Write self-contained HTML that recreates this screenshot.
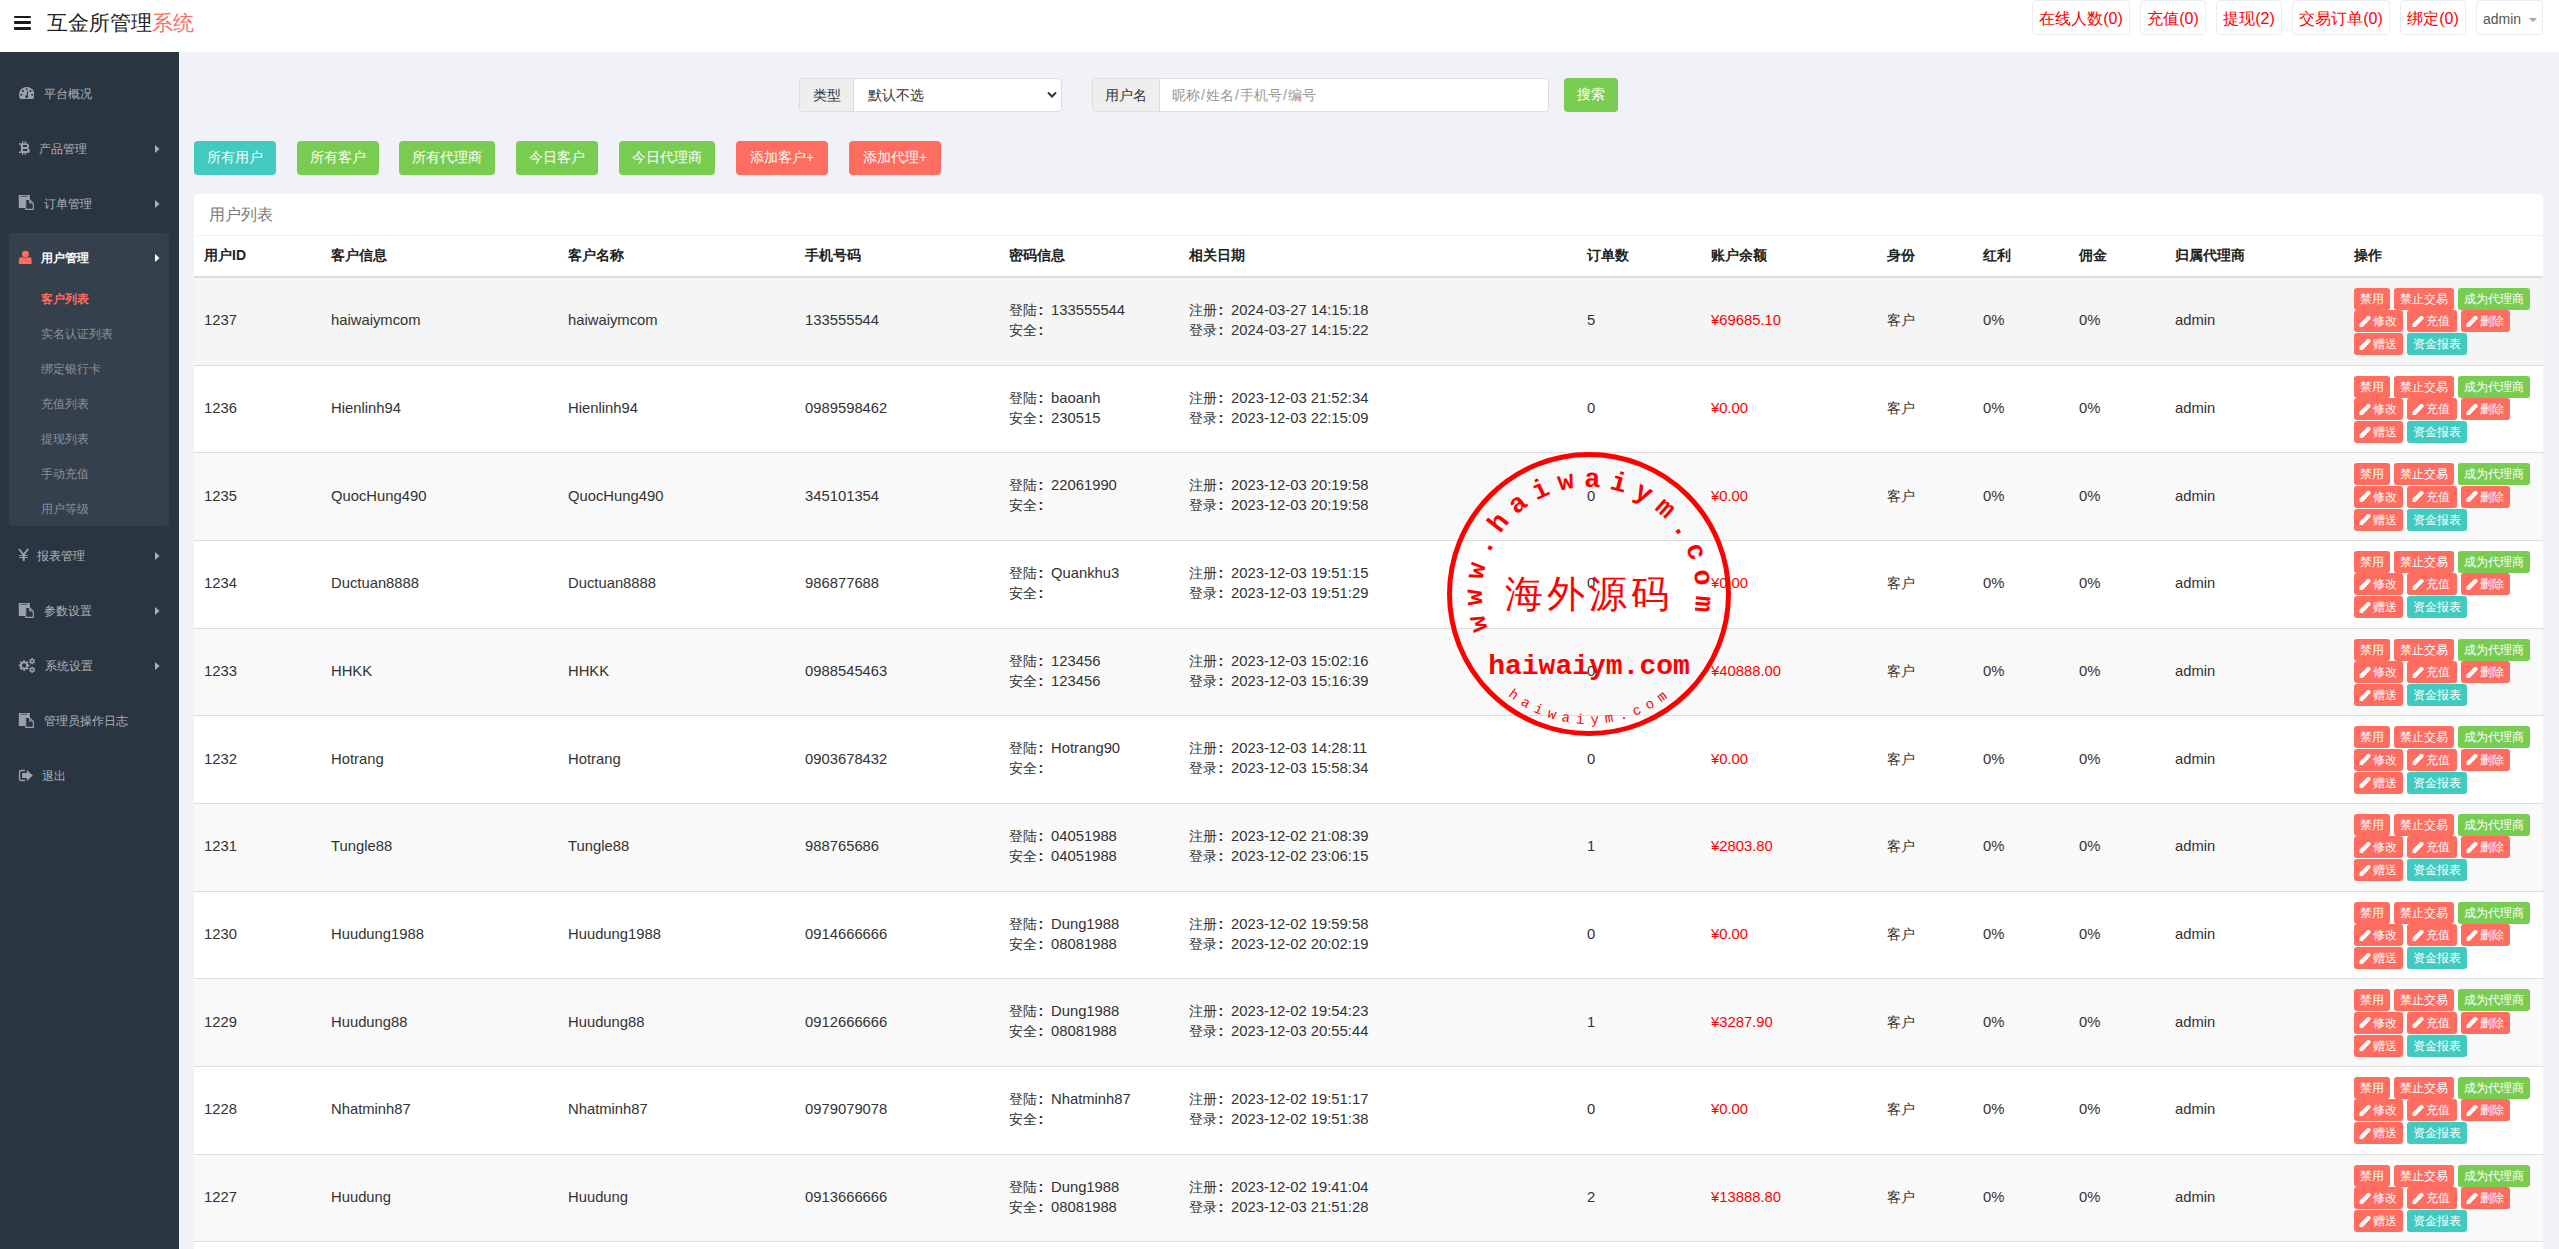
<!DOCTYPE html>
<html><head><meta charset="utf-8"><title>互金所管理系统</title>
<style>
*{box-sizing:border-box}
html,body{margin:0;padding:0}
body{width:2559px;height:1249px;overflow:hidden;background:#f1f2f7;font-family:"Liberation Sans",sans-serif;color:#333;position:relative}
#hdr{position:absolute;left:0;top:0;width:2559px;height:52px;background:#fff}
#burger{position:absolute;left:14px;top:15.8px;width:17px;height:14px}
#burger i{position:absolute;left:0;width:17px;height:2.7px;background:#1a1a1a;border-radius:1px}
#logo{position:absolute;left:47px;top:9px;font-size:21px;line-height:28px;color:#222;white-space:nowrap}
#logo span{color:#ff6c60}
.nb{position:absolute;top:0;height:35px;border:1px solid #e9ecf2;border-radius:4px;background:#fff;color:#f00;font-size:16px;line-height:35px;text-align:center;white-space:nowrap}
.adm{color:#555;font-size:14px;text-align:left;padding-left:6px;line-height:37px}
.caret{position:absolute;left:52px;top:17px;width:0;height:0;border-left:4px solid transparent;border-right:4px solid transparent;border-top:4px solid #a0a6b2}
#side{position:absolute;left:0;top:52px;width:179px;height:1197px;background:#2a3542}
.act{position:absolute;left:9px;top:181px;width:160px;height:293px;background:#35404d;border-radius:4px}
.mi{position:absolute;font-size:12px;line-height:20px;color:#aeb2b7;white-space:nowrap}
.mi.on{color:#fff;font-weight:bold}
.ic{position:absolute}
.si{position:absolute;left:41px;font-size:12px;line-height:20px;color:#89919a;white-space:nowrap}
.si.on{color:#ff6c60;font-weight:bold}
.ig{position:absolute;top:78px;height:34px;border:1px solid #ddd;border-radius:4px;background:#fff}
.ig .ad{position:absolute;left:0;top:0;height:32px;background:#eee;border-right:1px solid #ddd;border-radius:3px 0 0 3px;font-size:14px;line-height:32px;color:#333;text-align:center}
.ig .val{position:absolute;top:0;font-size:14px;line-height:32px;white-space:nowrap}
.btn{position:absolute;top:141px;height:34px;border-radius:4px;color:#fff;font-size:14px;line-height:32px;text-align:center;white-space:nowrap}
.bp{background:#41cac0}
.bs{background:#78cd51}
.bd{background:#ff6c60}
#panel{position:absolute;left:194px;top:194px;width:2349px;height:1100px;background:#fff;border-radius:4px;overflow:hidden}
.ph{position:absolute;left:0;top:0;width:100%;height:42px;border-bottom:1px solid #eff2f7;font-size:16px;line-height:42px;padding-left:15px;color:#797979}
.th{position:absolute;top:51px;font-size:14px;line-height:20px;font-weight:bold;color:#222;white-space:nowrap}
#panel:after{content:"";position:absolute;left:0;top:82px;width:100%;height:2px;background:#ddd}
.tr{position:absolute;left:0;width:100%;height:87.667px;border-bottom:1px solid #ddd}
.td{position:absolute;top:32.2px;font-size:14.8px;line-height:20px;color:#333;white-space:nowrap}
.td2{position:absolute;top:22px;font-size:14.8px;line-height:20px;color:#333;white-space:nowrap}
.red{color:#f00}
.sl{padding:0 1.3px 0 0.9px}
.c{font-size:14px}
.col{display:inline-block;width:14px;padding-left:1.5px;font-weight:bold;font-size:14.5px}
.ops{position:relative;width:190px;height:68px}
.bx{position:absolute;height:22px;border-radius:3px;color:#fff;font-size:12px;line-height:22px;text-align:center;white-space:nowrap}
.bx.d{background:#ff6c60}
.bx.s{background:#78cd51}
.bx.p{background:#41cac0}
.pc{position:absolute;left:4.8px;top:5.8px}
.bx.pb{text-align:left;padding-left:18.5px}
#stamp{position:absolute;overflow:visible}
.st1{font-family:"Liberation Mono",monospace;font-weight:bold;font-size:27px;fill:#f00;text-anchor:middle;dominant-baseline:central}
.st3{font-family:"Liberation Mono",monospace;font-size:14px;fill:#f00;text-anchor:middle;dominant-baseline:central}
.st2{font-family:"Liberation Serif",serif;font-size:38px;fill:#f00;text-anchor:middle;letter-spacing:4px}
.st4{font-family:"Liberation Mono",monospace;font-weight:bold;font-size:28px;fill:#f00;text-anchor:middle}
</style></head>
<body>
<div id="hdr">
<div id="burger"><i style="top:0"></i><i style="top:5.7px"></i><i style="top:11.3px"></i></div>
<div id="logo">互金所管理<span>系统</span></div>
<div class="nb" style="left:2032px;width:98px">在线人数(0)</div>
<div class="nb" style="left:2140px;width:66px">充值(0)</div>
<div class="nb" style="left:2216px;width:66px">提现(2)</div>
<div class="nb" style="left:2292px;width:98px">交易订单(0)</div>
<div class="nb" style="left:2400px;width:66px">绑定(0)</div>
<div class="nb adm" style="left:2476px;width:67px">admin<span class="caret"></span></div>
</div>
<div id="side">
<div class="act"></div>
<div class="mi" style="top:31.5px;left:43.6px">平台概况</div>
<svg class="ic" style="left:18.75px;top:34.90px" width="15.5" height="12.2" viewBox="0 0 15.5 12.2"><path d="M1.4 12.1 Q0 10.5 0 7.75 A7.75 7.75 0 0 1 15.5 7.75 Q15.5 10.5 14.1 12.1 Z" fill="#9ea3aa"/><g fill="#2a3542"><circle cx="7.75" cy="2.3" r="1.05"/><circle cx="4.05" cy="4.1" r="1.05"/><circle cx="11.45" cy="4.1" r="1.05"/><circle cx="2.25" cy="7.8" r="1.05"/><circle cx="13.25" cy="7.8" r="1.05"/><circle cx="7.75" cy="9.7" r="1.45"/></g><path d="M8.75 4.4 L7.9 9.5" stroke="#2a3542" stroke-width="1.1"/></svg>
<div class="mi" style="top:86.5px;left:39.4px">产品管理</div>
<svg class="ic" style="left:19px;top:89.0px" width="11" height="14" viewBox="0 0 11 14"><path fill="#9ea3aa" fill-rule="evenodd" d="M0 2.2 H7.3 Q10 2.2 10 4.9 Q10 6.4 8.9 6.9 Q10.8 7.5 10.8 9.4 Q10.8 12 7.8 12 H0 V10.4 H1.9 V3.8 H0 Z M4 3.9 V6 H7.2 Q8.1 6 8.1 4.95 Q8.1 3.9 7.2 3.9 Z M4 7.9 V10.1 H7.6 Q8.6 10.1 8.6 9 Q8.6 7.9 7.6 7.9 Z"/><rect x="3.1" y="0" width="1.1" height="2.4" fill="#9ea3aa"/><rect x="5.7" y="0" width="1.1" height="2.4" fill="#9ea3aa"/><rect x="3.1" y="11.8" width="1.1" height="2.2" fill="#9ea3aa"/><rect x="5.7" y="11.8" width="1.1" height="2.2" fill="#9ea3aa"/></svg>
<svg class="ic" style="left:155px;top:92.5px" width="5" height="8" viewBox="0 0 5 8"><path d="M0 0 L4.5 4 L0 8 Z" fill="#aeb2b7"/></svg>
<div class="mi" style="top:141.5px;left:43.6px">订单管理</div>
<svg class="ic" style="left:18px;top:142.3px" width="17" height="17" viewBox="0 0 17 17"><path d="M0.8 1 H11.8 V5 H7 V14 H0.8 Z" fill="#9ea3aa"/><rect x="2.6" y="1.8" width="6.6" height="0.9" fill="#2a3542" opacity="0.8"/><path d="M7.7 5.5 H11.4 L15.3 9.4 V15.4 H7.7 Z" fill="none" stroke="#9ea3aa" stroke-width="1.1"/><path d="M11.2 5.6 V9.6 H15.2 Z" fill="#9ea3aa"/><path d="M12.3 7.2 V8.6 H13.7 Z" fill="#2a3542"/></svg>
<svg class="ic" style="left:155px;top:147.5px" width="5" height="8" viewBox="0 0 5 8"><path d="M0 0 L4.5 4 L0 8 Z" fill="#aeb2b7"/></svg>
<div class="mi on" style="top:196.0px;left:40.5px">用户管理</div>
<svg class="ic" style="left:18px;top:198.0px" width="14" height="14" viewBox="0 0 14 14"><circle cx="7.4" cy="4.1" r="3.45" fill="#ff6c60"/><path d="M0.9 14 V9.6 Q0.9 7.2 3.3 7.2 H11.2 Q13.6 7.2 13.6 9.6 V14 Z" fill="#ff6c60"/><path d="M4.6 7.2 Q7.4 8.4 10.2 7.2" fill="none" stroke="#35404d" stroke-width="0.5"/></svg>
<svg class="ic" style="left:155px;top:202.0px" width="5" height="8" viewBox="0 0 5 8"><path d="M0 0 L4.5 4 L0 8 Z" fill="#fff"/></svg>
<div class="mi" style="top:494.0px;left:37.0px">报表管理</div>
<svg class="ic" style="left:18px;top:496.0px" width="11" height="14" viewBox="0 0 11 14"><path d="M1 1 L5.6 6.8 L10.2 1" fill="none" stroke="#9ea3aa" stroke-width="1.9"/><rect x="4.6" y="6" width="2.1" height="6.9" fill="#9ea3aa"/><rect x="1.3" y="6.9" width="8.5" height="1" fill="#9ea3aa"/><rect x="1.3" y="9" width="8.5" height="1" fill="#9ea3aa"/></svg>
<svg class="ic" style="left:155px;top:500.0px" width="5" height="8" viewBox="0 0 5 8"><path d="M0 0 L4.5 4 L0 8 Z" fill="#aeb2b7"/></svg>
<div class="mi" style="top:549.0px;left:43.7px">参数设置</div>
<svg class="ic" style="left:18px;top:549.8px" width="17" height="17" viewBox="0 0 17 17"><path d="M0.8 1 H11.8 V5 H7 V14 H0.8 Z" fill="#9ea3aa"/><rect x="2.6" y="1.8" width="6.6" height="0.9" fill="#2a3542" opacity="0.8"/><path d="M7.7 5.5 H11.4 L15.3 9.4 V15.4 H7.7 Z" fill="none" stroke="#9ea3aa" stroke-width="1.1"/><path d="M11.2 5.6 V9.6 H15.2 Z" fill="#9ea3aa"/><path d="M12.3 7.2 V8.6 H13.7 Z" fill="#2a3542"/></svg>
<svg class="ic" style="left:155px;top:555.0px" width="5" height="8" viewBox="0 0 5 8"><path d="M0 0 L4.5 4 L0 8 Z" fill="#aeb2b7"/></svg>
<div class="mi" style="top:604.0px;left:45.0px">系统设置</div>
<svg class="ic" style="left:18px;top:606.0px" width="18" height="16" viewBox="0 0 18 16"><path fill="#9ea3aa" fill-rule="evenodd" d="M5.14 3.51 L5.09 2.20 L7.11 2.20 L7.06 3.51 L8.24 4.00 L9.14 3.03 L10.57 4.46 L9.60 5.36 L10.09 6.54 L11.40 6.49 L11.40 8.51 L10.09 8.46 L9.60 9.64 L10.57 10.54 L9.14 11.97 L8.24 11.00 L7.06 11.49 L7.11 12.80 L5.09 12.80 L5.14 11.49 L3.96 11.00 L3.06 11.97 L1.63 10.54 L2.60 9.64 L2.11 8.46 L0.80 8.51 L0.80 6.49 L2.11 6.54 L2.60 5.36 L1.63 4.46 L3.06 3.03 L3.96 4.00 Z M8.30 7.50 A2.2 2.2 0 1 0 3.90 7.50 A2.2 2.2 0 1 0 8.30 7.50 Z M13.39 1.01 L13.30 0.10 L14.90 0.10 L14.81 1.01 L15.64 1.49 L16.39 0.96 L17.18 2.34 L16.35 2.72 L16.35 3.68 L17.18 4.06 L16.39 5.44 L15.64 4.91 L14.81 5.39 L14.90 6.30 L13.30 6.30 L13.39 5.39 L12.56 4.91 L11.81 5.44 L11.02 4.06 L11.85 3.68 L11.85 2.72 L11.02 2.34 L11.81 0.96 L12.56 1.49 Z M15.10 3.20 A1.0 1.0 0 1 0 13.10 3.20 A1.0 1.0 0 1 0 15.10 3.20 Z M13.39 9.61 L13.30 8.70 L14.90 8.70 L14.81 9.61 L15.64 10.09 L16.39 9.56 L17.18 10.94 L16.35 11.32 L16.35 12.28 L17.18 12.66 L16.39 14.04 L15.64 13.51 L14.81 13.99 L14.90 14.90 L13.30 14.90 L13.39 13.99 L12.56 13.51 L11.81 14.04 L11.02 12.66 L11.85 12.28 L11.85 11.32 L11.02 10.94 L11.81 9.56 L12.56 10.09 Z M15.10 11.80 A1.0 1.0 0 1 0 13.10 11.80 A1.0 1.0 0 1 0 15.10 11.80 Z"/></svg>
<svg class="ic" style="left:155px;top:610.0px" width="5" height="8" viewBox="0 0 5 8"><path d="M0 0 L4.5 4 L0 8 Z" fill="#aeb2b7"/></svg>
<div class="mi" style="top:659.0px;left:43.7px">管理员操作日志</div>
<svg class="ic" style="left:18px;top:659.8px" width="17" height="17" viewBox="0 0 17 17"><path d="M0.8 1 H11.8 V5 H7 V14 H0.8 Z" fill="#9ea3aa"/><rect x="2.6" y="1.8" width="6.6" height="0.9" fill="#2a3542" opacity="0.8"/><path d="M7.7 5.5 H11.4 L15.3 9.4 V15.4 H7.7 Z" fill="none" stroke="#9ea3aa" stroke-width="1.1"/><path d="M11.2 5.6 V9.6 H15.2 Z" fill="#9ea3aa"/><path d="M12.3 7.2 V8.6 H13.7 Z" fill="#2a3542"/></svg>
<div class="mi" style="top:714.0px;left:42.3px">退出</div>
<svg class="ic" style="left:18px;top:717.0px" width="19" height="13" viewBox="0 0 19 13"><path d="M6.9 1.5 H3.2 Q1.5 1.5 1.5 3.2 V9.8 Q1.5 11.5 3.2 11.5 H6.9" fill="none" stroke="#9ea3aa" stroke-width="1.4"/><path d="M4.1 4.0 H8.85 V1 L14.8 6.45 L8.85 11.9 V8.9 H4.1 Z" fill="#9ea3aa"/></svg>
<div class="si on" style="top:236.5px">客户列表</div>
<div class="si" style="top:271.5px">实名认证列表</div>
<div class="si" style="top:306.5px">绑定银行卡</div>
<div class="si" style="top:341.5px">充值列表</div>
<div class="si" style="top:376.5px">提现列表</div>
<div class="si" style="top:411.5px">手动充值</div>
<div class="si" style="top:446.5px">用户等级</div>
</div>
<div class="ig" style="left:799px;width:263px"><div class="ad" style="width:54px">类型</div><div class="val" style="left:68px">默认不选</div>
<svg style="position:absolute;left:247px;top:12px" width="10" height="8" viewBox="0 0 10 8"><path d="M1 1.5 L5 5.5 L9 1.5" fill="none" stroke="#333" stroke-width="2"/></svg></div>
<div class="ig" style="left:1092px;width:457px"><div class="ad" style="width:67px">用户名</div><div class="val" style="left:79px;color:#999">昵称<span class="sl">/</span>姓名<span class="sl">/</span>手机号<span class="sl">/</span>编号</div></div>
<div class="btn bs" style="left:1564px;top:78px;width:54px">搜索</div>
<div class="btn bp" style="left:194px;width:82px">所有用户</div>
<div class="btn bs" style="left:297px;width:82px">所有客户</div>
<div class="btn bs" style="left:399px;width:96px">所有代理商</div>
<div class="btn bs" style="left:516px;width:82px">今日客户</div>
<div class="btn bs" style="left:619px;width:96px">今日代理商</div>
<div class="btn bd" style="left:736px;width:92px">添加客户+</div>
<div class="btn bd" style="left:849px;width:92px">添加代理+</div>
<div id="panel">
<div class="ph">用户列表</div>
<div class="th" style="left:10px">用户ID</div>
<div class="th" style="left:137px">客户信息</div>
<div class="th" style="left:374px">客户名称</div>
<div class="th" style="left:611px">手机号码</div>
<div class="th" style="left:815px">密码信息</div>
<div class="th" style="left:995px">相关日期</div>
<div class="th" style="left:1393px">订单数</div>
<div class="th" style="left:1517px">账户余额</div>
<div class="th" style="left:1693px">身份</div>
<div class="th" style="left:1789px">红利</div>
<div class="th" style="left:1885px">佣金</div>
<div class="th" style="left:1981px">归属代理商</div>
<div class="th" style="left:2160px">操作</div>
<div class="tr" style="top:84.00px;background:#f5f5f5">
<div class="td" style="left:10px">1237</div>
<div class="td" style="left:137px">haiwaiymcom</div>
<div class="td" style="left:374px">haiwaiymcom</div>
<div class="td" style="left:611px">133555544</div>
<div class="td2" style="left:815px"><span class="c">登陆</span><span class="col">:</span>133555544<br><span class="c">安全</span><span class="col">:</span></div>
<div class="td2" style="left:995px"><span class="c">注册</span><span class="col">:</span>2024-03-27 14:15:18<br><span class="c">登录</span><span class="col">:</span>2024-03-27 14:15:22</div>
<div class="td" style="left:1393px">5</div>
<div class="td" style="left:1517px"><span class="red">¥69685.10</span></div>
<div class="td" style="left:1693px"><span class="c">客户</span></div>
<div class="td" style="left:1789px">0%</div>
<div class="td" style="left:1885px">0%</div>
<div class="td" style="left:1981px">admin</div>
<div style="position:absolute;left:2160px;top:10px"><div class="ops"><span class="bx d" style="left:0;top:0;width:36px">禁用</span><span class="bx d" style="left:40px;top:0;width:60px">禁止交易</span><span class="bx s" style="left:104px;top:0;width:72px">成为代理商</span><span class="bx d pb" style="left:0;top:22.3px;width:49px"><svg class="pc" width="12" height="12" viewBox="0 0 12 12"><path d="M0.6 7.8 L7.9 0.5 A2.15 2.15 0 0 1 10.9 3.6 L3.6 10.9 H0.6 Z" fill="#fff"/><path d="M6.9 1.5 L9.9 4.6" stroke="#ff6c60" stroke-width="0.5" opacity="0.5"/><path d="M1.7 8.6 L2.8 9.7" stroke="#ff6c60" stroke-width="0.7" opacity="0.6"/></svg>修改</span><span class="bx d pb" style="left:53px;top:22.3px;width:50px"><svg class="pc" width="12" height="12" viewBox="0 0 12 12"><path d="M0.6 7.8 L7.9 0.5 A2.15 2.15 0 0 1 10.9 3.6 L3.6 10.9 H0.6 Z" fill="#fff"/><path d="M6.9 1.5 L9.9 4.6" stroke="#ff6c60" stroke-width="0.5" opacity="0.5"/><path d="M1.7 8.6 L2.8 9.7" stroke="#ff6c60" stroke-width="0.7" opacity="0.6"/></svg>充值</span><span class="bx d pb" style="left:107px;top:22.3px;width:49px"><svg class="pc" width="12" height="12" viewBox="0 0 12 12"><path d="M0.6 7.8 L7.9 0.5 A2.15 2.15 0 0 1 10.9 3.6 L3.6 10.9 H0.6 Z" fill="#fff"/><path d="M6.9 1.5 L9.9 4.6" stroke="#ff6c60" stroke-width="0.5" opacity="0.5"/><path d="M1.7 8.6 L2.8 9.7" stroke="#ff6c60" stroke-width="0.7" opacity="0.6"/></svg>删除</span><span class="bx d pb" style="left:0;top:45.2px;width:49px"><svg class="pc" width="12" height="12" viewBox="0 0 12 12"><path d="M0.6 7.8 L7.9 0.5 A2.15 2.15 0 0 1 10.9 3.6 L3.6 10.9 H0.6 Z" fill="#fff"/><path d="M6.9 1.5 L9.9 4.6" stroke="#ff6c60" stroke-width="0.5" opacity="0.5"/><path d="M1.7 8.6 L2.8 9.7" stroke="#ff6c60" stroke-width="0.7" opacity="0.6"/></svg>赠送</span><span class="bx p" style="left:53px;top:45.2px;width:60px">资金报表</span></div></div>
</div>
<div class="tr" style="top:171.67px;background:#fff">
<div class="td" style="left:10px">1236</div>
<div class="td" style="left:137px">Hienlinh94</div>
<div class="td" style="left:374px">Hienlinh94</div>
<div class="td" style="left:611px">0989598462</div>
<div class="td2" style="left:815px"><span class="c">登陆</span><span class="col">:</span>baoanh<br><span class="c">安全</span><span class="col">:</span>230515</div>
<div class="td2" style="left:995px"><span class="c">注册</span><span class="col">:</span>2023-12-03 21:52:34<br><span class="c">登录</span><span class="col">:</span>2023-12-03 22:15:09</div>
<div class="td" style="left:1393px">0</div>
<div class="td" style="left:1517px"><span class="red">¥0.00</span></div>
<div class="td" style="left:1693px"><span class="c">客户</span></div>
<div class="td" style="left:1789px">0%</div>
<div class="td" style="left:1885px">0%</div>
<div class="td" style="left:1981px">admin</div>
<div style="position:absolute;left:2160px;top:10px"><div class="ops"><span class="bx d" style="left:0;top:0;width:36px">禁用</span><span class="bx d" style="left:40px;top:0;width:60px">禁止交易</span><span class="bx s" style="left:104px;top:0;width:72px">成为代理商</span><span class="bx d pb" style="left:0;top:22.3px;width:49px"><svg class="pc" width="12" height="12" viewBox="0 0 12 12"><path d="M0.6 7.8 L7.9 0.5 A2.15 2.15 0 0 1 10.9 3.6 L3.6 10.9 H0.6 Z" fill="#fff"/><path d="M6.9 1.5 L9.9 4.6" stroke="#ff6c60" stroke-width="0.5" opacity="0.5"/><path d="M1.7 8.6 L2.8 9.7" stroke="#ff6c60" stroke-width="0.7" opacity="0.6"/></svg>修改</span><span class="bx d pb" style="left:53px;top:22.3px;width:50px"><svg class="pc" width="12" height="12" viewBox="0 0 12 12"><path d="M0.6 7.8 L7.9 0.5 A2.15 2.15 0 0 1 10.9 3.6 L3.6 10.9 H0.6 Z" fill="#fff"/><path d="M6.9 1.5 L9.9 4.6" stroke="#ff6c60" stroke-width="0.5" opacity="0.5"/><path d="M1.7 8.6 L2.8 9.7" stroke="#ff6c60" stroke-width="0.7" opacity="0.6"/></svg>充值</span><span class="bx d pb" style="left:107px;top:22.3px;width:49px"><svg class="pc" width="12" height="12" viewBox="0 0 12 12"><path d="M0.6 7.8 L7.9 0.5 A2.15 2.15 0 0 1 10.9 3.6 L3.6 10.9 H0.6 Z" fill="#fff"/><path d="M6.9 1.5 L9.9 4.6" stroke="#ff6c60" stroke-width="0.5" opacity="0.5"/><path d="M1.7 8.6 L2.8 9.7" stroke="#ff6c60" stroke-width="0.7" opacity="0.6"/></svg>删除</span><span class="bx d pb" style="left:0;top:45.2px;width:49px"><svg class="pc" width="12" height="12" viewBox="0 0 12 12"><path d="M0.6 7.8 L7.9 0.5 A2.15 2.15 0 0 1 10.9 3.6 L3.6 10.9 H0.6 Z" fill="#fff"/><path d="M6.9 1.5 L9.9 4.6" stroke="#ff6c60" stroke-width="0.5" opacity="0.5"/><path d="M1.7 8.6 L2.8 9.7" stroke="#ff6c60" stroke-width="0.7" opacity="0.6"/></svg>赠送</span><span class="bx p" style="left:53px;top:45.2px;width:60px">资金报表</span></div></div>
</div>
<div class="tr" style="top:259.33px;background:#f9f9f9">
<div class="td" style="left:10px">1235</div>
<div class="td" style="left:137px">QuocHung490</div>
<div class="td" style="left:374px">QuocHung490</div>
<div class="td" style="left:611px">345101354</div>
<div class="td2" style="left:815px"><span class="c">登陆</span><span class="col">:</span>22061990<br><span class="c">安全</span><span class="col">:</span></div>
<div class="td2" style="left:995px"><span class="c">注册</span><span class="col">:</span>2023-12-03 20:19:58<br><span class="c">登录</span><span class="col">:</span>2023-12-03 20:19:58</div>
<div class="td" style="left:1393px">0</div>
<div class="td" style="left:1517px"><span class="red">¥0.00</span></div>
<div class="td" style="left:1693px"><span class="c">客户</span></div>
<div class="td" style="left:1789px">0%</div>
<div class="td" style="left:1885px">0%</div>
<div class="td" style="left:1981px">admin</div>
<div style="position:absolute;left:2160px;top:10px"><div class="ops"><span class="bx d" style="left:0;top:0;width:36px">禁用</span><span class="bx d" style="left:40px;top:0;width:60px">禁止交易</span><span class="bx s" style="left:104px;top:0;width:72px">成为代理商</span><span class="bx d pb" style="left:0;top:22.3px;width:49px"><svg class="pc" width="12" height="12" viewBox="0 0 12 12"><path d="M0.6 7.8 L7.9 0.5 A2.15 2.15 0 0 1 10.9 3.6 L3.6 10.9 H0.6 Z" fill="#fff"/><path d="M6.9 1.5 L9.9 4.6" stroke="#ff6c60" stroke-width="0.5" opacity="0.5"/><path d="M1.7 8.6 L2.8 9.7" stroke="#ff6c60" stroke-width="0.7" opacity="0.6"/></svg>修改</span><span class="bx d pb" style="left:53px;top:22.3px;width:50px"><svg class="pc" width="12" height="12" viewBox="0 0 12 12"><path d="M0.6 7.8 L7.9 0.5 A2.15 2.15 0 0 1 10.9 3.6 L3.6 10.9 H0.6 Z" fill="#fff"/><path d="M6.9 1.5 L9.9 4.6" stroke="#ff6c60" stroke-width="0.5" opacity="0.5"/><path d="M1.7 8.6 L2.8 9.7" stroke="#ff6c60" stroke-width="0.7" opacity="0.6"/></svg>充值</span><span class="bx d pb" style="left:107px;top:22.3px;width:49px"><svg class="pc" width="12" height="12" viewBox="0 0 12 12"><path d="M0.6 7.8 L7.9 0.5 A2.15 2.15 0 0 1 10.9 3.6 L3.6 10.9 H0.6 Z" fill="#fff"/><path d="M6.9 1.5 L9.9 4.6" stroke="#ff6c60" stroke-width="0.5" opacity="0.5"/><path d="M1.7 8.6 L2.8 9.7" stroke="#ff6c60" stroke-width="0.7" opacity="0.6"/></svg>删除</span><span class="bx d pb" style="left:0;top:45.2px;width:49px"><svg class="pc" width="12" height="12" viewBox="0 0 12 12"><path d="M0.6 7.8 L7.9 0.5 A2.15 2.15 0 0 1 10.9 3.6 L3.6 10.9 H0.6 Z" fill="#fff"/><path d="M6.9 1.5 L9.9 4.6" stroke="#ff6c60" stroke-width="0.5" opacity="0.5"/><path d="M1.7 8.6 L2.8 9.7" stroke="#ff6c60" stroke-width="0.7" opacity="0.6"/></svg>赠送</span><span class="bx p" style="left:53px;top:45.2px;width:60px">资金报表</span></div></div>
</div>
<div class="tr" style="top:347.00px;background:#fff">
<div class="td" style="left:10px">1234</div>
<div class="td" style="left:137px">Ductuan8888</div>
<div class="td" style="left:374px">Ductuan8888</div>
<div class="td" style="left:611px">986877688</div>
<div class="td2" style="left:815px"><span class="c">登陆</span><span class="col">:</span>Quankhu3<br><span class="c">安全</span><span class="col">:</span></div>
<div class="td2" style="left:995px"><span class="c">注册</span><span class="col">:</span>2023-12-03 19:51:15<br><span class="c">登录</span><span class="col">:</span>2023-12-03 19:51:29</div>
<div class="td" style="left:1393px">0</div>
<div class="td" style="left:1517px"><span class="red">¥0.00</span></div>
<div class="td" style="left:1693px"><span class="c">客户</span></div>
<div class="td" style="left:1789px">0%</div>
<div class="td" style="left:1885px">0%</div>
<div class="td" style="left:1981px">admin</div>
<div style="position:absolute;left:2160px;top:10px"><div class="ops"><span class="bx d" style="left:0;top:0;width:36px">禁用</span><span class="bx d" style="left:40px;top:0;width:60px">禁止交易</span><span class="bx s" style="left:104px;top:0;width:72px">成为代理商</span><span class="bx d pb" style="left:0;top:22.3px;width:49px"><svg class="pc" width="12" height="12" viewBox="0 0 12 12"><path d="M0.6 7.8 L7.9 0.5 A2.15 2.15 0 0 1 10.9 3.6 L3.6 10.9 H0.6 Z" fill="#fff"/><path d="M6.9 1.5 L9.9 4.6" stroke="#ff6c60" stroke-width="0.5" opacity="0.5"/><path d="M1.7 8.6 L2.8 9.7" stroke="#ff6c60" stroke-width="0.7" opacity="0.6"/></svg>修改</span><span class="bx d pb" style="left:53px;top:22.3px;width:50px"><svg class="pc" width="12" height="12" viewBox="0 0 12 12"><path d="M0.6 7.8 L7.9 0.5 A2.15 2.15 0 0 1 10.9 3.6 L3.6 10.9 H0.6 Z" fill="#fff"/><path d="M6.9 1.5 L9.9 4.6" stroke="#ff6c60" stroke-width="0.5" opacity="0.5"/><path d="M1.7 8.6 L2.8 9.7" stroke="#ff6c60" stroke-width="0.7" opacity="0.6"/></svg>充值</span><span class="bx d pb" style="left:107px;top:22.3px;width:49px"><svg class="pc" width="12" height="12" viewBox="0 0 12 12"><path d="M0.6 7.8 L7.9 0.5 A2.15 2.15 0 0 1 10.9 3.6 L3.6 10.9 H0.6 Z" fill="#fff"/><path d="M6.9 1.5 L9.9 4.6" stroke="#ff6c60" stroke-width="0.5" opacity="0.5"/><path d="M1.7 8.6 L2.8 9.7" stroke="#ff6c60" stroke-width="0.7" opacity="0.6"/></svg>删除</span><span class="bx d pb" style="left:0;top:45.2px;width:49px"><svg class="pc" width="12" height="12" viewBox="0 0 12 12"><path d="M0.6 7.8 L7.9 0.5 A2.15 2.15 0 0 1 10.9 3.6 L3.6 10.9 H0.6 Z" fill="#fff"/><path d="M6.9 1.5 L9.9 4.6" stroke="#ff6c60" stroke-width="0.5" opacity="0.5"/><path d="M1.7 8.6 L2.8 9.7" stroke="#ff6c60" stroke-width="0.7" opacity="0.6"/></svg>赠送</span><span class="bx p" style="left:53px;top:45.2px;width:60px">资金报表</span></div></div>
</div>
<div class="tr" style="top:434.67px;background:#f9f9f9">
<div class="td" style="left:10px">1233</div>
<div class="td" style="left:137px">HHKK</div>
<div class="td" style="left:374px">HHKK</div>
<div class="td" style="left:611px">0988545463</div>
<div class="td2" style="left:815px"><span class="c">登陆</span><span class="col">:</span>123456<br><span class="c">安全</span><span class="col">:</span>123456</div>
<div class="td2" style="left:995px"><span class="c">注册</span><span class="col">:</span>2023-12-03 15:02:16<br><span class="c">登录</span><span class="col">:</span>2023-12-03 15:16:39</div>
<div class="td" style="left:1393px">0</div>
<div class="td" style="left:1517px"><span class="red">¥40888.00</span></div>
<div class="td" style="left:1693px"><span class="c">客户</span></div>
<div class="td" style="left:1789px">0%</div>
<div class="td" style="left:1885px">0%</div>
<div class="td" style="left:1981px">admin</div>
<div style="position:absolute;left:2160px;top:10px"><div class="ops"><span class="bx d" style="left:0;top:0;width:36px">禁用</span><span class="bx d" style="left:40px;top:0;width:60px">禁止交易</span><span class="bx s" style="left:104px;top:0;width:72px">成为代理商</span><span class="bx d pb" style="left:0;top:22.3px;width:49px"><svg class="pc" width="12" height="12" viewBox="0 0 12 12"><path d="M0.6 7.8 L7.9 0.5 A2.15 2.15 0 0 1 10.9 3.6 L3.6 10.9 H0.6 Z" fill="#fff"/><path d="M6.9 1.5 L9.9 4.6" stroke="#ff6c60" stroke-width="0.5" opacity="0.5"/><path d="M1.7 8.6 L2.8 9.7" stroke="#ff6c60" stroke-width="0.7" opacity="0.6"/></svg>修改</span><span class="bx d pb" style="left:53px;top:22.3px;width:50px"><svg class="pc" width="12" height="12" viewBox="0 0 12 12"><path d="M0.6 7.8 L7.9 0.5 A2.15 2.15 0 0 1 10.9 3.6 L3.6 10.9 H0.6 Z" fill="#fff"/><path d="M6.9 1.5 L9.9 4.6" stroke="#ff6c60" stroke-width="0.5" opacity="0.5"/><path d="M1.7 8.6 L2.8 9.7" stroke="#ff6c60" stroke-width="0.7" opacity="0.6"/></svg>充值</span><span class="bx d pb" style="left:107px;top:22.3px;width:49px"><svg class="pc" width="12" height="12" viewBox="0 0 12 12"><path d="M0.6 7.8 L7.9 0.5 A2.15 2.15 0 0 1 10.9 3.6 L3.6 10.9 H0.6 Z" fill="#fff"/><path d="M6.9 1.5 L9.9 4.6" stroke="#ff6c60" stroke-width="0.5" opacity="0.5"/><path d="M1.7 8.6 L2.8 9.7" stroke="#ff6c60" stroke-width="0.7" opacity="0.6"/></svg>删除</span><span class="bx d pb" style="left:0;top:45.2px;width:49px"><svg class="pc" width="12" height="12" viewBox="0 0 12 12"><path d="M0.6 7.8 L7.9 0.5 A2.15 2.15 0 0 1 10.9 3.6 L3.6 10.9 H0.6 Z" fill="#fff"/><path d="M6.9 1.5 L9.9 4.6" stroke="#ff6c60" stroke-width="0.5" opacity="0.5"/><path d="M1.7 8.6 L2.8 9.7" stroke="#ff6c60" stroke-width="0.7" opacity="0.6"/></svg>赠送</span><span class="bx p" style="left:53px;top:45.2px;width:60px">资金报表</span></div></div>
</div>
<div class="tr" style="top:522.34px;background:#fff">
<div class="td" style="left:10px">1232</div>
<div class="td" style="left:137px">Hotrang</div>
<div class="td" style="left:374px">Hotrang</div>
<div class="td" style="left:611px">0903678432</div>
<div class="td2" style="left:815px"><span class="c">登陆</span><span class="col">:</span>Hotrang90<br><span class="c">安全</span><span class="col">:</span></div>
<div class="td2" style="left:995px"><span class="c">注册</span><span class="col">:</span>2023-12-03 14:28:11<br><span class="c">登录</span><span class="col">:</span>2023-12-03 15:58:34</div>
<div class="td" style="left:1393px">0</div>
<div class="td" style="left:1517px"><span class="red">¥0.00</span></div>
<div class="td" style="left:1693px"><span class="c">客户</span></div>
<div class="td" style="left:1789px">0%</div>
<div class="td" style="left:1885px">0%</div>
<div class="td" style="left:1981px">admin</div>
<div style="position:absolute;left:2160px;top:10px"><div class="ops"><span class="bx d" style="left:0;top:0;width:36px">禁用</span><span class="bx d" style="left:40px;top:0;width:60px">禁止交易</span><span class="bx s" style="left:104px;top:0;width:72px">成为代理商</span><span class="bx d pb" style="left:0;top:22.3px;width:49px"><svg class="pc" width="12" height="12" viewBox="0 0 12 12"><path d="M0.6 7.8 L7.9 0.5 A2.15 2.15 0 0 1 10.9 3.6 L3.6 10.9 H0.6 Z" fill="#fff"/><path d="M6.9 1.5 L9.9 4.6" stroke="#ff6c60" stroke-width="0.5" opacity="0.5"/><path d="M1.7 8.6 L2.8 9.7" stroke="#ff6c60" stroke-width="0.7" opacity="0.6"/></svg>修改</span><span class="bx d pb" style="left:53px;top:22.3px;width:50px"><svg class="pc" width="12" height="12" viewBox="0 0 12 12"><path d="M0.6 7.8 L7.9 0.5 A2.15 2.15 0 0 1 10.9 3.6 L3.6 10.9 H0.6 Z" fill="#fff"/><path d="M6.9 1.5 L9.9 4.6" stroke="#ff6c60" stroke-width="0.5" opacity="0.5"/><path d="M1.7 8.6 L2.8 9.7" stroke="#ff6c60" stroke-width="0.7" opacity="0.6"/></svg>充值</span><span class="bx d pb" style="left:107px;top:22.3px;width:49px"><svg class="pc" width="12" height="12" viewBox="0 0 12 12"><path d="M0.6 7.8 L7.9 0.5 A2.15 2.15 0 0 1 10.9 3.6 L3.6 10.9 H0.6 Z" fill="#fff"/><path d="M6.9 1.5 L9.9 4.6" stroke="#ff6c60" stroke-width="0.5" opacity="0.5"/><path d="M1.7 8.6 L2.8 9.7" stroke="#ff6c60" stroke-width="0.7" opacity="0.6"/></svg>删除</span><span class="bx d pb" style="left:0;top:45.2px;width:49px"><svg class="pc" width="12" height="12" viewBox="0 0 12 12"><path d="M0.6 7.8 L7.9 0.5 A2.15 2.15 0 0 1 10.9 3.6 L3.6 10.9 H0.6 Z" fill="#fff"/><path d="M6.9 1.5 L9.9 4.6" stroke="#ff6c60" stroke-width="0.5" opacity="0.5"/><path d="M1.7 8.6 L2.8 9.7" stroke="#ff6c60" stroke-width="0.7" opacity="0.6"/></svg>赠送</span><span class="bx p" style="left:53px;top:45.2px;width:60px">资金报表</span></div></div>
</div>
<div class="tr" style="top:610.00px;background:#f9f9f9">
<div class="td" style="left:10px">1231</div>
<div class="td" style="left:137px">Tungle88</div>
<div class="td" style="left:374px">Tungle88</div>
<div class="td" style="left:611px">988765686</div>
<div class="td2" style="left:815px"><span class="c">登陆</span><span class="col">:</span>04051988<br><span class="c">安全</span><span class="col">:</span>04051988</div>
<div class="td2" style="left:995px"><span class="c">注册</span><span class="col">:</span>2023-12-02 21:08:39<br><span class="c">登录</span><span class="col">:</span>2023-12-02 23:06:15</div>
<div class="td" style="left:1393px">1</div>
<div class="td" style="left:1517px"><span class="red">¥2803.80</span></div>
<div class="td" style="left:1693px"><span class="c">客户</span></div>
<div class="td" style="left:1789px">0%</div>
<div class="td" style="left:1885px">0%</div>
<div class="td" style="left:1981px">admin</div>
<div style="position:absolute;left:2160px;top:10px"><div class="ops"><span class="bx d" style="left:0;top:0;width:36px">禁用</span><span class="bx d" style="left:40px;top:0;width:60px">禁止交易</span><span class="bx s" style="left:104px;top:0;width:72px">成为代理商</span><span class="bx d pb" style="left:0;top:22.3px;width:49px"><svg class="pc" width="12" height="12" viewBox="0 0 12 12"><path d="M0.6 7.8 L7.9 0.5 A2.15 2.15 0 0 1 10.9 3.6 L3.6 10.9 H0.6 Z" fill="#fff"/><path d="M6.9 1.5 L9.9 4.6" stroke="#ff6c60" stroke-width="0.5" opacity="0.5"/><path d="M1.7 8.6 L2.8 9.7" stroke="#ff6c60" stroke-width="0.7" opacity="0.6"/></svg>修改</span><span class="bx d pb" style="left:53px;top:22.3px;width:50px"><svg class="pc" width="12" height="12" viewBox="0 0 12 12"><path d="M0.6 7.8 L7.9 0.5 A2.15 2.15 0 0 1 10.9 3.6 L3.6 10.9 H0.6 Z" fill="#fff"/><path d="M6.9 1.5 L9.9 4.6" stroke="#ff6c60" stroke-width="0.5" opacity="0.5"/><path d="M1.7 8.6 L2.8 9.7" stroke="#ff6c60" stroke-width="0.7" opacity="0.6"/></svg>充值</span><span class="bx d pb" style="left:107px;top:22.3px;width:49px"><svg class="pc" width="12" height="12" viewBox="0 0 12 12"><path d="M0.6 7.8 L7.9 0.5 A2.15 2.15 0 0 1 10.9 3.6 L3.6 10.9 H0.6 Z" fill="#fff"/><path d="M6.9 1.5 L9.9 4.6" stroke="#ff6c60" stroke-width="0.5" opacity="0.5"/><path d="M1.7 8.6 L2.8 9.7" stroke="#ff6c60" stroke-width="0.7" opacity="0.6"/></svg>删除</span><span class="bx d pb" style="left:0;top:45.2px;width:49px"><svg class="pc" width="12" height="12" viewBox="0 0 12 12"><path d="M0.6 7.8 L7.9 0.5 A2.15 2.15 0 0 1 10.9 3.6 L3.6 10.9 H0.6 Z" fill="#fff"/><path d="M6.9 1.5 L9.9 4.6" stroke="#ff6c60" stroke-width="0.5" opacity="0.5"/><path d="M1.7 8.6 L2.8 9.7" stroke="#ff6c60" stroke-width="0.7" opacity="0.6"/></svg>赠送</span><span class="bx p" style="left:53px;top:45.2px;width:60px">资金报表</span></div></div>
</div>
<div class="tr" style="top:697.67px;background:#fff">
<div class="td" style="left:10px">1230</div>
<div class="td" style="left:137px">Huudung1988</div>
<div class="td" style="left:374px">Huudung1988</div>
<div class="td" style="left:611px">0914666666</div>
<div class="td2" style="left:815px"><span class="c">登陆</span><span class="col">:</span>Dung1988<br><span class="c">安全</span><span class="col">:</span>08081988</div>
<div class="td2" style="left:995px"><span class="c">注册</span><span class="col">:</span>2023-12-02 19:59:58<br><span class="c">登录</span><span class="col">:</span>2023-12-02 20:02:19</div>
<div class="td" style="left:1393px">0</div>
<div class="td" style="left:1517px"><span class="red">¥0.00</span></div>
<div class="td" style="left:1693px"><span class="c">客户</span></div>
<div class="td" style="left:1789px">0%</div>
<div class="td" style="left:1885px">0%</div>
<div class="td" style="left:1981px">admin</div>
<div style="position:absolute;left:2160px;top:10px"><div class="ops"><span class="bx d" style="left:0;top:0;width:36px">禁用</span><span class="bx d" style="left:40px;top:0;width:60px">禁止交易</span><span class="bx s" style="left:104px;top:0;width:72px">成为代理商</span><span class="bx d pb" style="left:0;top:22.3px;width:49px"><svg class="pc" width="12" height="12" viewBox="0 0 12 12"><path d="M0.6 7.8 L7.9 0.5 A2.15 2.15 0 0 1 10.9 3.6 L3.6 10.9 H0.6 Z" fill="#fff"/><path d="M6.9 1.5 L9.9 4.6" stroke="#ff6c60" stroke-width="0.5" opacity="0.5"/><path d="M1.7 8.6 L2.8 9.7" stroke="#ff6c60" stroke-width="0.7" opacity="0.6"/></svg>修改</span><span class="bx d pb" style="left:53px;top:22.3px;width:50px"><svg class="pc" width="12" height="12" viewBox="0 0 12 12"><path d="M0.6 7.8 L7.9 0.5 A2.15 2.15 0 0 1 10.9 3.6 L3.6 10.9 H0.6 Z" fill="#fff"/><path d="M6.9 1.5 L9.9 4.6" stroke="#ff6c60" stroke-width="0.5" opacity="0.5"/><path d="M1.7 8.6 L2.8 9.7" stroke="#ff6c60" stroke-width="0.7" opacity="0.6"/></svg>充值</span><span class="bx d pb" style="left:107px;top:22.3px;width:49px"><svg class="pc" width="12" height="12" viewBox="0 0 12 12"><path d="M0.6 7.8 L7.9 0.5 A2.15 2.15 0 0 1 10.9 3.6 L3.6 10.9 H0.6 Z" fill="#fff"/><path d="M6.9 1.5 L9.9 4.6" stroke="#ff6c60" stroke-width="0.5" opacity="0.5"/><path d="M1.7 8.6 L2.8 9.7" stroke="#ff6c60" stroke-width="0.7" opacity="0.6"/></svg>删除</span><span class="bx d pb" style="left:0;top:45.2px;width:49px"><svg class="pc" width="12" height="12" viewBox="0 0 12 12"><path d="M0.6 7.8 L7.9 0.5 A2.15 2.15 0 0 1 10.9 3.6 L3.6 10.9 H0.6 Z" fill="#fff"/><path d="M6.9 1.5 L9.9 4.6" stroke="#ff6c60" stroke-width="0.5" opacity="0.5"/><path d="M1.7 8.6 L2.8 9.7" stroke="#ff6c60" stroke-width="0.7" opacity="0.6"/></svg>赠送</span><span class="bx p" style="left:53px;top:45.2px;width:60px">资金报表</span></div></div>
</div>
<div class="tr" style="top:785.34px;background:#f9f9f9">
<div class="td" style="left:10px">1229</div>
<div class="td" style="left:137px">Huudung88</div>
<div class="td" style="left:374px">Huudung88</div>
<div class="td" style="left:611px">0912666666</div>
<div class="td2" style="left:815px"><span class="c">登陆</span><span class="col">:</span>Dung1988<br><span class="c">安全</span><span class="col">:</span>08081988</div>
<div class="td2" style="left:995px"><span class="c">注册</span><span class="col">:</span>2023-12-02 19:54:23<br><span class="c">登录</span><span class="col">:</span>2023-12-03 20:55:44</div>
<div class="td" style="left:1393px">1</div>
<div class="td" style="left:1517px"><span class="red">¥3287.90</span></div>
<div class="td" style="left:1693px"><span class="c">客户</span></div>
<div class="td" style="left:1789px">0%</div>
<div class="td" style="left:1885px">0%</div>
<div class="td" style="left:1981px">admin</div>
<div style="position:absolute;left:2160px;top:10px"><div class="ops"><span class="bx d" style="left:0;top:0;width:36px">禁用</span><span class="bx d" style="left:40px;top:0;width:60px">禁止交易</span><span class="bx s" style="left:104px;top:0;width:72px">成为代理商</span><span class="bx d pb" style="left:0;top:22.3px;width:49px"><svg class="pc" width="12" height="12" viewBox="0 0 12 12"><path d="M0.6 7.8 L7.9 0.5 A2.15 2.15 0 0 1 10.9 3.6 L3.6 10.9 H0.6 Z" fill="#fff"/><path d="M6.9 1.5 L9.9 4.6" stroke="#ff6c60" stroke-width="0.5" opacity="0.5"/><path d="M1.7 8.6 L2.8 9.7" stroke="#ff6c60" stroke-width="0.7" opacity="0.6"/></svg>修改</span><span class="bx d pb" style="left:53px;top:22.3px;width:50px"><svg class="pc" width="12" height="12" viewBox="0 0 12 12"><path d="M0.6 7.8 L7.9 0.5 A2.15 2.15 0 0 1 10.9 3.6 L3.6 10.9 H0.6 Z" fill="#fff"/><path d="M6.9 1.5 L9.9 4.6" stroke="#ff6c60" stroke-width="0.5" opacity="0.5"/><path d="M1.7 8.6 L2.8 9.7" stroke="#ff6c60" stroke-width="0.7" opacity="0.6"/></svg>充值</span><span class="bx d pb" style="left:107px;top:22.3px;width:49px"><svg class="pc" width="12" height="12" viewBox="0 0 12 12"><path d="M0.6 7.8 L7.9 0.5 A2.15 2.15 0 0 1 10.9 3.6 L3.6 10.9 H0.6 Z" fill="#fff"/><path d="M6.9 1.5 L9.9 4.6" stroke="#ff6c60" stroke-width="0.5" opacity="0.5"/><path d="M1.7 8.6 L2.8 9.7" stroke="#ff6c60" stroke-width="0.7" opacity="0.6"/></svg>删除</span><span class="bx d pb" style="left:0;top:45.2px;width:49px"><svg class="pc" width="12" height="12" viewBox="0 0 12 12"><path d="M0.6 7.8 L7.9 0.5 A2.15 2.15 0 0 1 10.9 3.6 L3.6 10.9 H0.6 Z" fill="#fff"/><path d="M6.9 1.5 L9.9 4.6" stroke="#ff6c60" stroke-width="0.5" opacity="0.5"/><path d="M1.7 8.6 L2.8 9.7" stroke="#ff6c60" stroke-width="0.7" opacity="0.6"/></svg>赠送</span><span class="bx p" style="left:53px;top:45.2px;width:60px">资金报表</span></div></div>
</div>
<div class="tr" style="top:873.00px;background:#fff">
<div class="td" style="left:10px">1228</div>
<div class="td" style="left:137px">Nhatminh87</div>
<div class="td" style="left:374px">Nhatminh87</div>
<div class="td" style="left:611px">0979079078</div>
<div class="td2" style="left:815px"><span class="c">登陆</span><span class="col">:</span>Nhatminh87<br><span class="c">安全</span><span class="col">:</span></div>
<div class="td2" style="left:995px"><span class="c">注册</span><span class="col">:</span>2023-12-02 19:51:17<br><span class="c">登录</span><span class="col">:</span>2023-12-02 19:51:38</div>
<div class="td" style="left:1393px">0</div>
<div class="td" style="left:1517px"><span class="red">¥0.00</span></div>
<div class="td" style="left:1693px"><span class="c">客户</span></div>
<div class="td" style="left:1789px">0%</div>
<div class="td" style="left:1885px">0%</div>
<div class="td" style="left:1981px">admin</div>
<div style="position:absolute;left:2160px;top:10px"><div class="ops"><span class="bx d" style="left:0;top:0;width:36px">禁用</span><span class="bx d" style="left:40px;top:0;width:60px">禁止交易</span><span class="bx s" style="left:104px;top:0;width:72px">成为代理商</span><span class="bx d pb" style="left:0;top:22.3px;width:49px"><svg class="pc" width="12" height="12" viewBox="0 0 12 12"><path d="M0.6 7.8 L7.9 0.5 A2.15 2.15 0 0 1 10.9 3.6 L3.6 10.9 H0.6 Z" fill="#fff"/><path d="M6.9 1.5 L9.9 4.6" stroke="#ff6c60" stroke-width="0.5" opacity="0.5"/><path d="M1.7 8.6 L2.8 9.7" stroke="#ff6c60" stroke-width="0.7" opacity="0.6"/></svg>修改</span><span class="bx d pb" style="left:53px;top:22.3px;width:50px"><svg class="pc" width="12" height="12" viewBox="0 0 12 12"><path d="M0.6 7.8 L7.9 0.5 A2.15 2.15 0 0 1 10.9 3.6 L3.6 10.9 H0.6 Z" fill="#fff"/><path d="M6.9 1.5 L9.9 4.6" stroke="#ff6c60" stroke-width="0.5" opacity="0.5"/><path d="M1.7 8.6 L2.8 9.7" stroke="#ff6c60" stroke-width="0.7" opacity="0.6"/></svg>充值</span><span class="bx d pb" style="left:107px;top:22.3px;width:49px"><svg class="pc" width="12" height="12" viewBox="0 0 12 12"><path d="M0.6 7.8 L7.9 0.5 A2.15 2.15 0 0 1 10.9 3.6 L3.6 10.9 H0.6 Z" fill="#fff"/><path d="M6.9 1.5 L9.9 4.6" stroke="#ff6c60" stroke-width="0.5" opacity="0.5"/><path d="M1.7 8.6 L2.8 9.7" stroke="#ff6c60" stroke-width="0.7" opacity="0.6"/></svg>删除</span><span class="bx d pb" style="left:0;top:45.2px;width:49px"><svg class="pc" width="12" height="12" viewBox="0 0 12 12"><path d="M0.6 7.8 L7.9 0.5 A2.15 2.15 0 0 1 10.9 3.6 L3.6 10.9 H0.6 Z" fill="#fff"/><path d="M6.9 1.5 L9.9 4.6" stroke="#ff6c60" stroke-width="0.5" opacity="0.5"/><path d="M1.7 8.6 L2.8 9.7" stroke="#ff6c60" stroke-width="0.7" opacity="0.6"/></svg>赠送</span><span class="bx p" style="left:53px;top:45.2px;width:60px">资金报表</span></div></div>
</div>
<div class="tr" style="top:960.67px;background:#f9f9f9">
<div class="td" style="left:10px">1227</div>
<div class="td" style="left:137px">Huudung</div>
<div class="td" style="left:374px">Huudung</div>
<div class="td" style="left:611px">0913666666</div>
<div class="td2" style="left:815px"><span class="c">登陆</span><span class="col">:</span>Dung1988<br><span class="c">安全</span><span class="col">:</span>08081988</div>
<div class="td2" style="left:995px"><span class="c">注册</span><span class="col">:</span>2023-12-02 19:41:04<br><span class="c">登录</span><span class="col">:</span>2023-12-03 21:51:28</div>
<div class="td" style="left:1393px">2</div>
<div class="td" style="left:1517px"><span class="red">¥13888.80</span></div>
<div class="td" style="left:1693px"><span class="c">客户</span></div>
<div class="td" style="left:1789px">0%</div>
<div class="td" style="left:1885px">0%</div>
<div class="td" style="left:1981px">admin</div>
<div style="position:absolute;left:2160px;top:10px"><div class="ops"><span class="bx d" style="left:0;top:0;width:36px">禁用</span><span class="bx d" style="left:40px;top:0;width:60px">禁止交易</span><span class="bx s" style="left:104px;top:0;width:72px">成为代理商</span><span class="bx d pb" style="left:0;top:22.3px;width:49px"><svg class="pc" width="12" height="12" viewBox="0 0 12 12"><path d="M0.6 7.8 L7.9 0.5 A2.15 2.15 0 0 1 10.9 3.6 L3.6 10.9 H0.6 Z" fill="#fff"/><path d="M6.9 1.5 L9.9 4.6" stroke="#ff6c60" stroke-width="0.5" opacity="0.5"/><path d="M1.7 8.6 L2.8 9.7" stroke="#ff6c60" stroke-width="0.7" opacity="0.6"/></svg>修改</span><span class="bx d pb" style="left:53px;top:22.3px;width:50px"><svg class="pc" width="12" height="12" viewBox="0 0 12 12"><path d="M0.6 7.8 L7.9 0.5 A2.15 2.15 0 0 1 10.9 3.6 L3.6 10.9 H0.6 Z" fill="#fff"/><path d="M6.9 1.5 L9.9 4.6" stroke="#ff6c60" stroke-width="0.5" opacity="0.5"/><path d="M1.7 8.6 L2.8 9.7" stroke="#ff6c60" stroke-width="0.7" opacity="0.6"/></svg>充值</span><span class="bx d pb" style="left:107px;top:22.3px;width:49px"><svg class="pc" width="12" height="12" viewBox="0 0 12 12"><path d="M0.6 7.8 L7.9 0.5 A2.15 2.15 0 0 1 10.9 3.6 L3.6 10.9 H0.6 Z" fill="#fff"/><path d="M6.9 1.5 L9.9 4.6" stroke="#ff6c60" stroke-width="0.5" opacity="0.5"/><path d="M1.7 8.6 L2.8 9.7" stroke="#ff6c60" stroke-width="0.7" opacity="0.6"/></svg>删除</span><span class="bx d pb" style="left:0;top:45.2px;width:49px"><svg class="pc" width="12" height="12" viewBox="0 0 12 12"><path d="M0.6 7.8 L7.9 0.5 A2.15 2.15 0 0 1 10.9 3.6 L3.6 10.9 H0.6 Z" fill="#fff"/><path d="M6.9 1.5 L9.9 4.6" stroke="#ff6c60" stroke-width="0.5" opacity="0.5"/><path d="M1.7 8.6 L2.8 9.7" stroke="#ff6c60" stroke-width="0.7" opacity="0.6"/></svg>赠送</span><span class="bx p" style="left:53px;top:45.2px;width:60px">资金报表</span></div></div>
</div>
</div>
<svg id="stamp" style="left:1439px;top:444px" width="300" height="300" viewBox="0 0 300 300">
<circle cx="150" cy="150" r="139.5" fill="none" stroke="#f00" stroke-width="5"/>
<text x="0" y="0" transform="translate(39.88,179.51) rotate(-105.00)" class="st1">w</text>
<text x="0" y="0" transform="translate(36.05,153.32) rotate(-91.67)" class="st1">w</text>
<text x="0" y="0" transform="translate(38.36,126.95) rotate(-78.33)" class="st1">w</text>
<text x="0" y="0" transform="translate(46.68,101.82) rotate(-65.00)" class="st1">.</text>
<text x="0" y="0" transform="translate(60.58,79.29) rotate(-51.67)" class="st1">h</text>
<text x="0" y="0" transform="translate(79.29,60.58) rotate(-38.33)" class="st1">a</text>
<text x="0" y="0" transform="translate(101.82,46.68) rotate(-25.00)" class="st1">i</text>
<text x="0" y="0" transform="translate(126.95,38.36) rotate(-11.67)" class="st1">w</text>
<text x="0" y="0" transform="translate(153.32,36.05) rotate(1.67)" class="st1">a</text>
<text x="0" y="0" transform="translate(179.51,39.88) rotate(15.00)" class="st1">i</text>
<text x="0" y="0" transform="translate(204.10,49.66) rotate(28.33)" class="st1">y</text>
<text x="0" y="0" transform="translate(225.79,64.84) rotate(41.67)" class="st1">m</text>
<text x="0" y="0" transform="translate(243.38,84.61) rotate(55.00)" class="st1">.</text>
<text x="0" y="0" transform="translate(255.95,107.91) rotate(68.33)" class="st1">c</text>
<text x="0" y="0" transform="translate(262.80,133.48) rotate(81.67)" class="st1">o</text>
<text x="0" y="0" transform="translate(263.57,159.94) rotate(95.00)" class="st1">m</text>
<text x="0" y="0" transform="translate(74.52,250.89) rotate(36.80)" class="st3">h</text>
<text x="0" y="0" transform="translate(86.55,258.86) rotate(30.24)" class="st3">a</text>
<text x="0" y="0" transform="translate(99.41,265.40) rotate(23.67)" class="st3">i</text>
<text x="0" y="0" transform="translate(112.93,270.42) rotate(17.11)" class="st3">w</text>
<text x="0" y="0" transform="translate(126.94,273.87) rotate(10.55)" class="st3">a</text>
<text x="0" y="0" transform="translate(141.25,275.70) rotate(3.98)" class="st3">i</text>
<text x="0" y="0" transform="translate(155.68,275.87) rotate(-2.58)" class="st3">y</text>
<text x="0" y="0" transform="translate(170.03,274.40) rotate(-9.15)" class="st3">m</text>
<text x="0" y="0" transform="translate(184.11,271.29) rotate(-15.71)" class="st3">.</text>
<text x="0" y="0" transform="translate(197.76,266.60) rotate(-22.27)" class="st3">c</text>
<text x="0" y="0" transform="translate(210.77,260.38) rotate(-28.84)" class="st3">o</text>
<text x="0" y="0" transform="translate(222.99,252.71) rotate(-35.40)" class="st3">m</text>
<text x="150" y="163" class="st2">海外源码</text>
<text x="150" y="230" class="st4">haiwaiym.com</text>
</svg>
</body></html>
